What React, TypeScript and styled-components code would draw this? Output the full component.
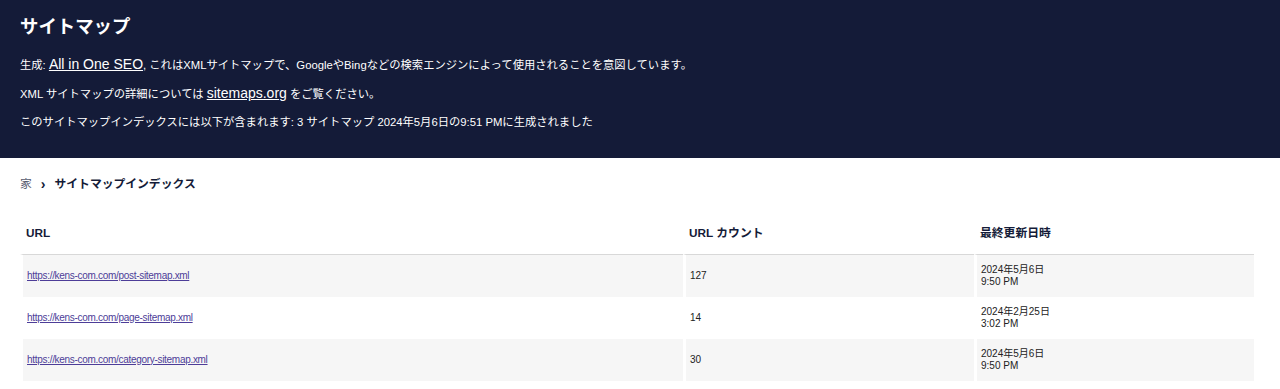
import React from "react";
import styled, { createGlobalStyle } from "styled-components";

const GlobalStyle = createGlobalStyle`
  html, body {
    margin: 0;
    padding: 0;
    background: #ffffff;
  }
  body {
    font-family: "Liberation Sans", Arial, "Noto Sans CJK JP", sans-serif;
    color: #141b38;
  }
`;

const Header = styled.header`
  background-color: #141b38;
  padding: 15px 20px 26px;
  color: #ffffff;
`;

const Title = styled.h1`
  margin: 0 0 15px;
  font-size: 18.4px;
  line-height: 24px;
  font-weight: 700;
`;

const Info = styled.p`
  margin: 0 0 8px;
  font-size: 11.3px;
  line-height: 20px;
  &:last-child {
    margin-bottom: 0;
  }
`;

const HeadLink = styled.a`
  color: #ffffff;
  font-size: 14px;
  text-decoration: underline;
`;

const Breadcrumb = styled.nav`
  display: flex;
  align-items: center;
  gap: 9px;
  margin: 17px 20px 0;
  font-size: 11.8px;
  line-height: 18px;
`;

const Crumb = styled.span`
  color: #555a6e;
`;

const Chevron = styled.span`
  color: #141b38;
  font-weight: 700;
  font-size: 14px;
  line-height: 18px;
`;

const Current = styled.span`
  color: #141b38;
  font-weight: 700;
`;

const Table = styled.table`
  margin: 18px 20px 0;
  width: 1234px;
  table-layout: fixed;
  border-collapse: separate;
  border-spacing: 0;
`;

const HeadCell = styled.th`
  text-align: left;
  font-size: 11.8px;
  line-height: 14px;
  font-weight: 700;
  color: #141b38;
  padding: 15px 5px 14px 3px;
  border-left: 3px solid #ffffff;
  border-bottom: 1px solid #d8d8d8;
`;

const Row = styled.tr<{ $stripe: boolean }>`
  background-color: ${(p) => (p.$stripe ? "#f6f6f6" : "#ffffff")};
`;

const Cell = styled.td`
  font-size: 10px;
  line-height: 12.5px;
  color: #222222;
  padding: 8px 5px 8px 4px;
  height: 26px;
  border-left: 3px solid #ffffff;
  vertical-align: middle;
`;

const UrlLink = styled.a`
  color: #4d3d98;
  text-decoration: underline;
  letter-spacing: -0.3px;
`;

const rows = [
  { url: "https://kens-com.com/post-sitemap.xml", count: "127", date: "2024年5月6日", time: "9:50 PM" },
  { url: "https://kens-com.com/page-sitemap.xml", count: "14", date: "2024年2月25日", time: "3:02 PM" },
  { url: "https://kens-com.com/category-sitemap.xml", count: "30", date: "2024年5月6日", time: "9:50 PM" },
];

export default function App() {
  return (
    <>
      <GlobalStyle />
      <Header>
        <Title>サイトマップ</Title>
        <Info>
          生成: <HeadLink href="#">All in One SEO</HeadLink>, これはXMLサイトマップで、GoogleやBingなどの検索エンジンによって使用されることを意図しています。
        </Info>
        <Info>
          XML サイトマップの詳細については <HeadLink href="#">sitemaps.org</HeadLink> をご覧ください。
        </Info>
        <Info>
          このサイトマップインデックスには以下が含まれます: 3 サイトマップ 2024年5月6日の9:51 PMに生成されました
        </Info>
      </Header>
      <Breadcrumb>
        <Crumb>家</Crumb>
        <Chevron>›</Chevron>
        <Current>サイトマップインデックス</Current>
      </Breadcrumb>
      <Table>
        <colgroup>
          <col style={{ width: 663 }} />
          <col style={{ width: 291 }} />
          <col style={{ width: 280 }} />
        </colgroup>
        <thead>
          <tr>
            <HeadCell>URL</HeadCell>
            <HeadCell>URL カウント</HeadCell>
            <HeadCell>最終更新日時</HeadCell>
          </tr>
        </thead>
        <tbody>
          {rows.map((r, i) => (
            <Row key={r.url} $stripe={i % 2 === 0}>
              <Cell>
                <UrlLink href="#">{r.url}</UrlLink>
              </Cell>
              <Cell>{r.count}</Cell>
              <Cell>
                {r.date}
                <br />
                {r.time}
              </Cell>
            </Row>
          ))}
        </tbody>
      </Table>
    </>
  );
}
